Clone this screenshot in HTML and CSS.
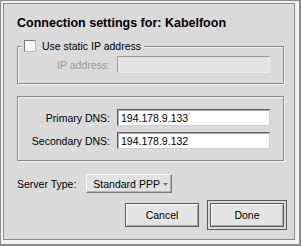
FILE: index.html
```html
<!DOCTYPE html>
<html lang="en">

<head>
    <meta charset="UTF-8">
    <title>Connection settings</title>
    <link rel="stylesheet" href="styles.css">
</head>

<body>
    <div class="frame">
        <div class="dialog">
            <h1 class="title">Connection settings for: Kabelfoon</h1>

            <fieldset class="group group-ip">
                <legend class="group-legend">
                    <input type="checkbox" class="check" id="staticIp">
                    <label for="staticIp">Use static IP address</label>
                </legend>
                <div class="form-grid">
                    <label class="field-label disabled">IP address:</label>
                    <input type="text" class="field field-disabled" disabled>
                </div>
            </fieldset>

            <fieldset class="group group-dns">
                <div class="form-grid">
                    <label class="field-label">Primary DNS:</label>
                    <input type="text" class="field" value="194.178.9.133">
                    <label class="field-label">Secondary DNS:</label>
                    <input type="text" class="field" value="194.178.9.132">
                </div>
            </fieldset>

            <div class="server-row">
                <span class="server-label">Server Type:</span>
                <button class="popup">
                    Standard PPP
                    <svg class="popup-arrow" width="5" height="3" viewBox="0 0 5 3">
                        <path d="M0 0 H5 L2.5 3 Z" fill="#6e6e6e" />
                    </svg>
                </button>
            </div>

            <div class="actions">
                <button class="btn">Cancel</button>
                <button class="btn btn-default">Done</button>
            </div>
        </div>
    </div>
</body>

</html>
```

FILE: styles.css
```css
* {
    box-sizing: border-box;
}

body {
    margin: 0;
    background: #dadada;
    font-family: "Liberation Sans", Arial, sans-serif;
    font-size: 10.5px;
    color: #000;
}

.frame {
    width: 301px;
    height: 246px;
    display: flex;
    flex-direction: column;
    border: 2px solid #8c8c8c;
    border-width: 1px 2px 2px 1px;
    padding: 2px 4px 4px 2px;
    background: #f2f2f2;
}

.dialog {
    flex: 1;
    border: 1px solid #8c8c8c;
    background: #dadada;
    padding: 12px 10px 0 13px;
}

.title {
    margin: 0;
    font-size: 12.5px;
    line-height: 14px;
    font-weight: bold;
}

.group {
    margin: 10px 0 0;
    border: 1px solid #8a8a8a;
    box-shadow: 1px 1px 0 #f4f4f4, inset 1px 1px 0 #f4f4f4;
    min-width: 0;
}

.group-ip {
    padding: 4px 13px 10px 0;
}

.group-dns {
    margin-top: 12px;
    padding: 12px 13px 11px 0;
}

.group-legend {
    display: flex;
    align-items: center;
    gap: 6px;
    height: 12px;
    margin-left: 3px;
    padding: 0 3px;
    background: #dadada;
    line-height: 12px;
}

.check {
    appearance: none;
    margin: 0;
    width: 12px;
    height: 12px;
    background: #fff;
    border: 1px solid;
    border-color: #7a7a7a #b8b8b8 #b8b8b8 #7a7a7a;
}

.form-grid {
    display: grid;
    grid-template-columns: 92px 153px;
    column-gap: 7px;
    row-gap: 6px;
    align-items: center;
}

.field-label {
    text-align: right;
}

.disabled {
    color: #999;
}

.field {
    height: 17px;
    margin: 0;
    padding: 0 3px;
    font: inherit;
    color: #000;
    background: #fff;
    border: 1px solid;
    border-color: #5e5e5e #d0d0d0 #d0d0d0 #5e5e5e;
    box-shadow: inset 1px 1px 0 #a8a8a8;
    outline: none;
}

.field-disabled {
    background: #e4e4e4;
    border-color: #9c9c9c #efefef #efefef #9c9c9c;
    box-shadow: none;
}

.server-row {
    display: flex;
    align-items: center;
    gap: 10px;
    margin-top: 13px;
}

.popup {
    display: flex;
    align-items: center;
    gap: 3px;
    height: 19px;
    margin: 0;
    padding: 0 3px 0 6px;
    font: inherit;
    color: #000;
    background: #e2e2e2;
    border: 1px solid;
    border-color: #f6f6f6 #7a7a7a #7a7a7a #f6f6f6;
    box-shadow: inset -1px -1px 0 #b4b4b4;
}

.popup-arrow {
    margin-top: 2px;
}

.actions {
    display: flex;
    justify-content: flex-end;
    gap: 11px;
    margin-top: 10px;
}

.btn {
    width: 74px;
    height: 24px;
    margin: 0;
    padding: 0;
    font: inherit;
    color: #000;
    background: #e4e4e4;
    border: 1px solid #5a5a5a;
    box-shadow: inset 1px 1px 0 #fafafa, inset -1px -1px 0 #a6a6a6;
}

.btn-default {
    outline: 1px solid #5a5a5a;
    outline-offset: 2px;
}
```
